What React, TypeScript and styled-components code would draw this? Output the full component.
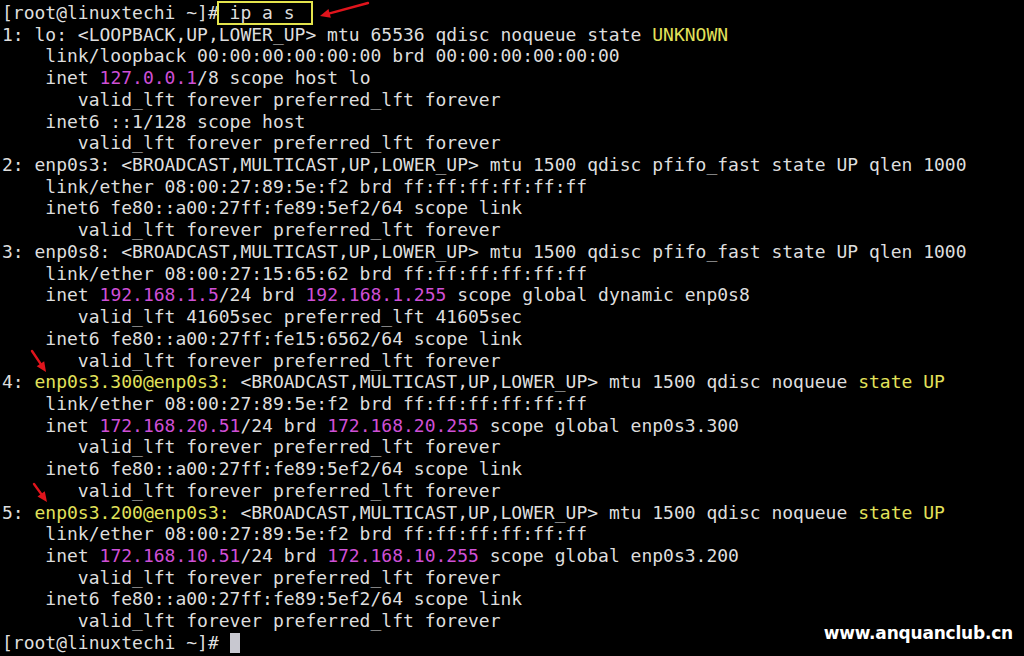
import React from "react";
import styled, { createGlobalStyle } from "styled-components";

const Global = createGlobalStyle`
  html, body { margin: 0; padding: 0; background: #000; }
  body { width: 1024px; height: 656px; overflow: hidden; }
`;

const Screen = styled.div`
  position: relative;
  width: 1024px;
  height: 656px;
  background: #000;
  overflow: hidden;
`;

const Terminal = styled.pre`
  margin: 0;
  padding: 2px 0 0 2px;
  font-family: "DejaVu Sans Mono", "Liberation Mono", monospace;
  font-size: 18px;
  line-height: 21.72px;
  color: #dedede;
  white-space: pre;
`;

const Line = styled.div`
  height: 21.72px;
`;

const Tone = styled.span<{ $c: "m" | "y" }>`
  color: ${(p) => (p.$c === "m" ? "#cf4fd6" : "#e2e25a")};
`;

const Boxed = styled.span`
  position: relative;
  &::after {
    content: "";
    position: absolute;
    left: -2px;
    right: 3px;
    top: -1px;
    bottom: -2px;
    border: 2px solid #e4e44c;
  }
`;

const Cursor = styled.span`
  display: inline-block;
  width: 10px;
  height: 20px;
  background: #c8c8d0;
  vertical-align: -4px;
`;

const Watermark = styled.div`
  position: absolute;
  right: 11px;
  bottom: 13px;
  font-family: "DejaVu Sans", "Liberation Sans", sans-serif;
  font-weight: bold;
  font-size: 17px;
  letter-spacing: -0.2px;
  color: #fff;
`;

const Arrow = styled.svg`
  position: absolute;
  overflow: visible;
  left: 0;
  top: 0;
  pointer-events: none;
`;

const M = ({ children }: { children: React.ReactNode }) => <Tone $c="m">{children}</Tone>;
const Y = ({ children }: { children: React.ReactNode }) => <Tone $c="y">{children}</Tone>;

const lines: React.ReactNode[] = [
  <>[root@linuxtechi ~]#<Boxed> ip a s  </Boxed></>,
  <>1: lo: &lt;LOOPBACK,UP,LOWER_UP&gt; mtu 65536 qdisc noqueue state <Y>UNKNOWN</Y></>,
  <>    link/loopback 00:00:00:00:00:00 brd 00:00:00:00:00:00</>,
  <>    inet <M>127.0.0.1</M>/8 scope host lo</>,
  <>       valid_lft forever preferred_lft forever</>,
  <>    inet6 ::1/128 scope host</>,
  <>       valid_lft forever preferred_lft forever</>,
  <>2: enp0s3: &lt;BROADCAST,MULTICAST,UP,LOWER_UP&gt; mtu 1500 qdisc pfifo_fast state UP qlen 1000</>,
  <>    link/ether 08:00:27:89:5e:f2 brd ff:ff:ff:ff:ff:ff</>,
  <>    inet6 fe80::a00:27ff:fe89:5ef2/64 scope link</>,
  <>       valid_lft forever preferred_lft forever</>,
  <>3: enp0s8: &lt;BROADCAST,MULTICAST,UP,LOWER_UP&gt; mtu 1500 qdisc pfifo_fast state UP qlen 1000</>,
  <>    link/ether 08:00:27:15:65:62 brd ff:ff:ff:ff:ff:ff</>,
  <>    inet <M>192.168.1.5</M>/24 brd <M>192.168.1.255</M> scope global dynamic enp0s8</>,
  <>       valid_lft 41605sec preferred_lft 41605sec</>,
  <>    inet6 fe80::a00:27ff:fe15:6562/64 scope link</>,
  <>       valid_lft forever preferred_lft forever</>,
  <>4: <Y>enp0s3.300@enp0s3:</Y> &lt;BROADCAST,MULTICAST,UP,LOWER_UP&gt; mtu 1500 qdisc noqueue <Y>state UP</Y></>,
  <>    link/ether 08:00:27:89:5e:f2 brd ff:ff:ff:ff:ff:ff</>,
  <>    inet <M>172.168.20.51</M>/24 brd <M>172.168.20.255</M> scope global enp0s3.300</>,
  <>       valid_lft forever preferred_lft forever</>,
  <>    inet6 fe80::a00:27ff:fe89:5ef2/64 scope link</>,
  <>       valid_lft forever preferred_lft forever</>,
  <>5: <Y>enp0s3.200@enp0s3:</Y> &lt;BROADCAST,MULTICAST,UP,LOWER_UP&gt; mtu 1500 qdisc noqueue <Y>state UP</Y></>,
  <>    link/ether 08:00:27:89:5e:f2 brd ff:ff:ff:ff:ff:ff</>,
  <>    inet <M>172.168.10.51</M>/24 brd <M>172.168.10.255</M> scope global enp0s3.200</>,
  <>       valid_lft forever preferred_lft forever</>,
  <>    inet6 fe80::a00:27ff:fe89:5ef2/64 scope link</>,
  <>       valid_lft forever preferred_lft forever</>,
  <>[root@linuxtechi ~]# <Cursor /></>,
];

const RedArrow = ({ x1, y1, x2, y2 }: { x1: number; y1: number; x2: number; y2: number }) => {
  const a = Math.atan2(y2 - y1, x2 - x1);
  const L = 10;
  const W = 4.5;
  const bx = x2 - L * Math.cos(a);
  const by = y2 - L * Math.sin(a);
  const px = -Math.sin(a) * W;
  const py = Math.cos(a) * W;
  return (
    <g>
      <line x1={x1} y1={y1} x2={bx} y2={by} stroke="#e0141c" strokeWidth={2.4} strokeLinecap="round" />
      <polygon points={`${x2},${y2} ${bx + px},${by + py} ${bx - px},${by - py}`} fill="#e0141c" />
    </g>
  );
};

export default function App() {
  return (
    <Screen>
      <Global />
      <Terminal>
        {lines.map((l, i) => (
          <Line key={i}>{l}</Line>
        ))}
      </Terminal>
      <Arrow width="1024" height="656">
        <RedArrow x1={368} y1={3} x2={320} y2={16} />
        <RedArrow x1={32} y1={351} x2={46} y2={372} />
        <RedArrow x1={34} y1={484} x2={47} y2={502} />
      </Arrow>
      <Watermark>www.anquanclub.cn</Watermark>
    </Screen>
  );
}
